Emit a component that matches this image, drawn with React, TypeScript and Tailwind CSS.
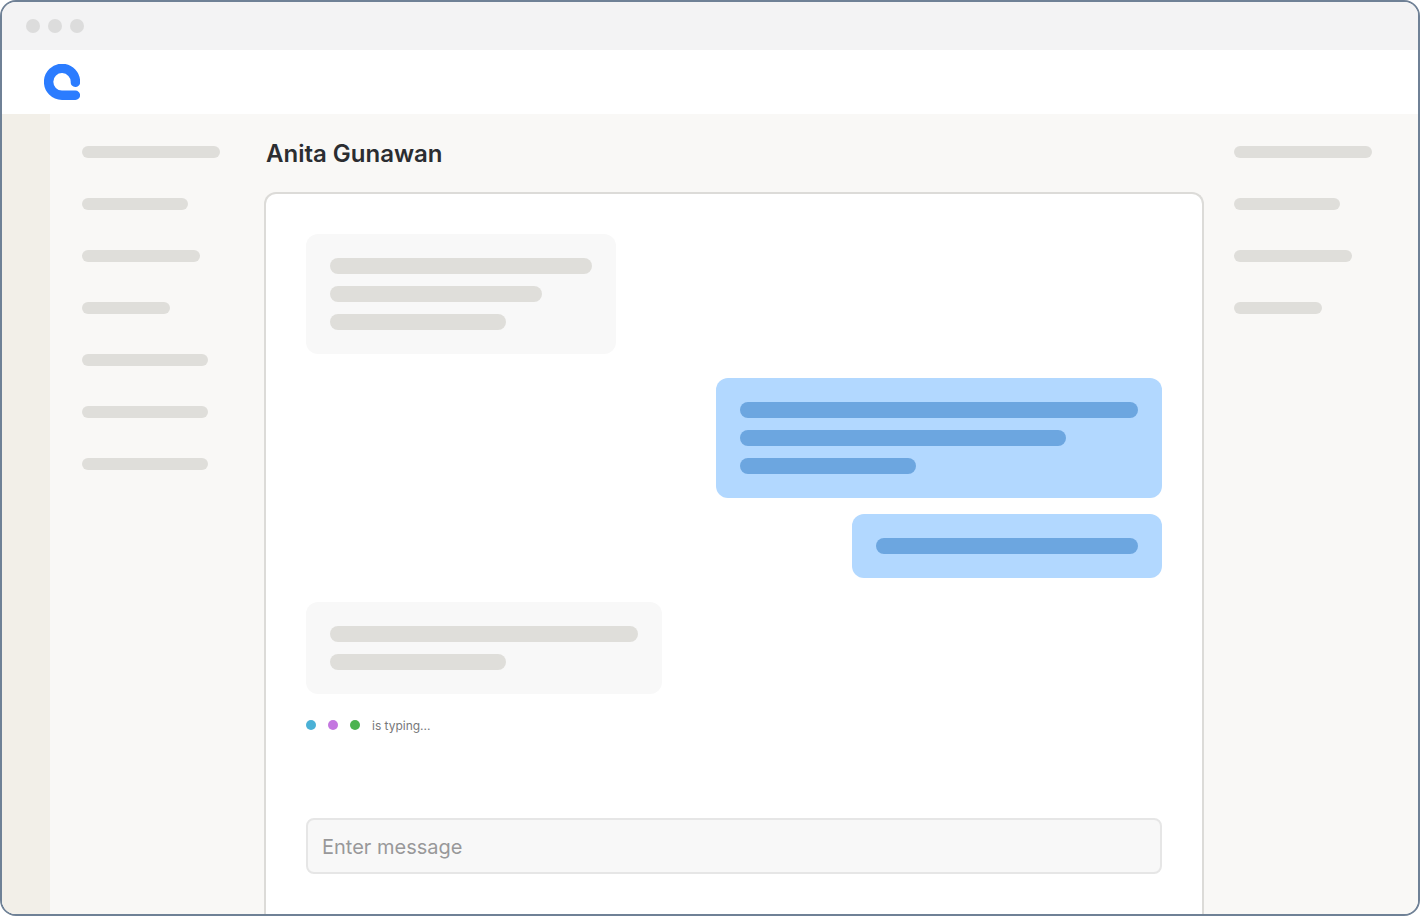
const sidebarLeft = ['w-[138px]', 'w-[106px]', 'w-[118px]', 'w-[88px]', 'w-[126px]', 'w-[126px]', 'w-[126px]'];
const sidebarRight = ['w-[138px]', 'w-[106px]', 'w-[118px]', 'w-[88px]'];

function SideLines({ widths }: { widths: string[] }) {
  return (
    <div className="flex flex-col gap-10">
      {widths.map((w, i) => (
        <div key={i} className={`h-3 rounded-full bg-[#dfdeda] ${w}`} />
      ))}
    </div>
  );
}

function Logo() {
  return (
    <svg width="36" height="36" viewBox="0 0 36 36" fill="none">
      <path
        d="M31.4 18.4A13.4 13.4 0 1 0 18 31.2H31.4"
        stroke="#2b7cff"
        strokeWidth="9.4"
        strokeLinecap="round"
        strokeLinejoin="round"
      />
    </svg>
  );
}

export default function App() {
  return (
    <div className="w-[1420px] h-[916px] flex flex-col overflow-hidden rounded-2xl border-2 border-[#6f8196] bg-white font-['Inter',sans-serif]">
      <div className="h-12 shrink-0 flex items-center gap-2 pl-6 bg-[#f3f3f4]">
        <span className="w-3.5 h-3.5 rounded-full bg-[#dcdcdc]" />
        <span className="w-3.5 h-3.5 rounded-full bg-[#dcdcdc]" />
        <span className="w-3.5 h-3.5 rounded-full bg-[#dcdcdc]" />
      </div>

      <header className="h-16 shrink-0 flex items-center pl-[42px] bg-white">
        <Logo />
      </header>

      <div className="flex flex-1 min-h-0 bg-[#f9f8f6]">
        <div className="w-12 shrink-0 bg-[#f2efe8]" />

        <aside className="w-[214px] shrink-0 pl-8 pt-8">
          <SideLines widths={sidebarLeft} />
        </aside>

        <main className="w-[940px] shrink-0 flex flex-col">
          <h1 className="h-[78px] pt-[25px] pl-0.5 text-2xl leading-[30px] font-semibold text-[#2b2d31]">
            Anita Gunawan
          </h1>

          <div className="flex-1 flex flex-col rounded-t-xl border-2 border-b-0 border-[#dcdbd8] bg-white px-10 pt-10">
            <div className="w-[310px] h-[120px] flex flex-col gap-3 rounded-xl bg-[#f8f8f8] p-6">
              <div className="w-[262px] h-4 rounded-full bg-[#dfdeda]" />
              <div className="w-[212px] h-4 rounded-full bg-[#dfdeda]" />
              <div className="w-[176px] h-4 rounded-full bg-[#dfdeda]" />
            </div>

            <div className="self-end w-[446px] h-[120px] mt-6 flex flex-col gap-3 rounded-xl bg-[#b2d8ff] p-6">
              <div className="w-[398px] h-4 rounded-full bg-[#6ca6e0]" />
              <div className="w-[326px] h-4 rounded-full bg-[#6ca6e0]" />
              <div className="w-[176px] h-4 rounded-full bg-[#6ca6e0]" />
            </div>

            <div className="self-end w-[310px] h-16 mt-4 rounded-xl bg-[#b2d8ff] p-6">
              <div className="w-[262px] h-4 rounded-full bg-[#6ca6e0]" />
            </div>

            <div className="w-[356px] h-[92px] mt-6 flex flex-col gap-3 rounded-xl bg-[#f8f8f8] p-6">
              <div className="w-[308px] h-4 rounded-full bg-[#dfdeda]" />
              <div className="w-[176px] h-4 rounded-full bg-[#dfdeda]" />
            </div>

            <div className="h-5 mt-[21px] flex items-center">
              <span className="w-2.5 h-2.5 rounded-full bg-[#4bb1d6]" />
              <span className="w-2.5 h-2.5 ml-3 rounded-full bg-[#c477e0]" />
              <span className="w-2.5 h-2.5 ml-3 rounded-full bg-[#4cb34f]" />
              <span className="ml-3 pt-0.5 text-xs leading-5 tracking-[-0.02px] text-[#77787a]">is typing...</span>
            </div>

            <div className="h-14 mt-[83px] flex items-center rounded-lg border-2 border-[#e6e6e6] bg-[#f8f8f8] px-3.5">
              <span className="pt-0.5 text-xl text-[#98989a]">Enter message</span>
            </div>
          </div>
        </main>

        <aside className="flex-1 pl-[30px] pt-8">
          <SideLines widths={sidebarRight} />
        </aside>
      </div>
    </div>
  );
}
